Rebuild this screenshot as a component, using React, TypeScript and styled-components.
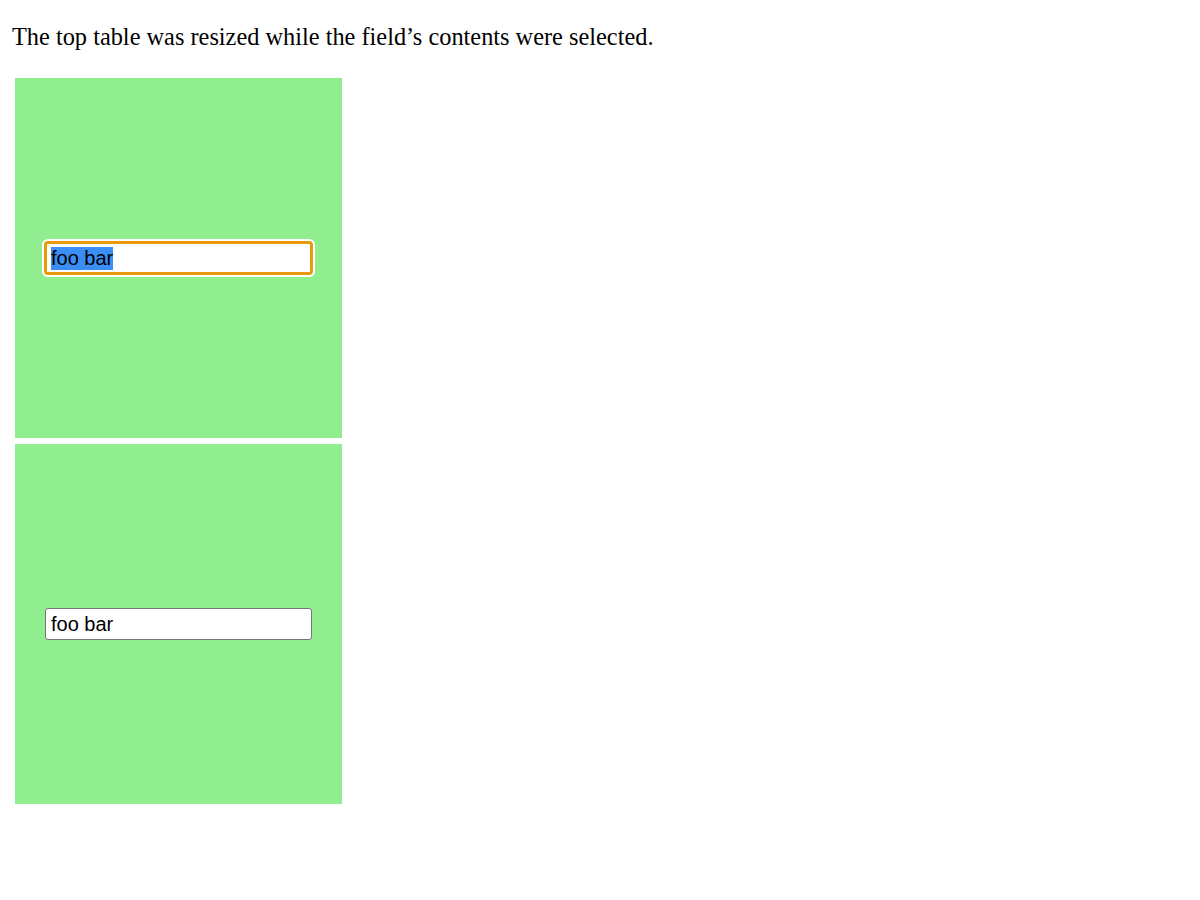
import React, { useEffect, useRef } from "react";
import styled, { createGlobalStyle } from "styled-components";

const Global = createGlobalStyle`
  html, body { margin: 0; padding: 0; background: #ffffff; }
  body { font-family: "Liberation Serif", "Times New Roman", serif; color: #000; }
`;

const Page = styled.div`
  display: flex;
  flex-direction: column;
  align-items: flex-start;
  padding: 23px 0 0 12px;
`;

const Caption = styled.p`
  margin: 0;
  font-size: 24.35px;
  line-height: 28px;
`;

const Stack = styled.div`
  display: flex;
  flex-direction: column;
  gap: 6px;
  margin: 27px 0 0 3px;
`;

const Cell = styled.div`
  width: 327px;
  height: 360px;
  background: #90ee90;
  display: flex;
  align-items: center;
  justify-content: center;
`;

const Field = styled.input<{ $active?: boolean }>`
  box-sizing: border-box;
  width: 267px;
  height: 32px;
  margin: 0;
  padding: 0 5px;
  font-family: "Liberation Sans", Arial, sans-serif;
  font-size: 20px;
  color: #000;
  background: #fff;
  border: 1px solid ${(p) => (p.$active ? "#e89a0c" : "#767676")};
  border-radius: 3px;
  outline: ${(p) => (p.$active ? "3px solid #e89a0c" : "none")};
  outline-offset: -2px;
  box-shadow: ${(p) => (p.$active ? "0 0 0 3px #ffffff" : "none")};

  &::selection {
    background: #3a8ef6;
    color: #000;
  }
`;

export default function App() {
  const ref = useRef<HTMLInputElement>(null);
  useEffect(() => {
    const el = ref.current;
    if (el) {
      el.focus();
      el.select();
    }
  }, []);
  return (
    <>
      <Global />
      <Page>
        <Caption>The top table was resized while the field’s contents were selected.</Caption>
        <Stack>
          <Cell>
            <Field ref={ref} $active defaultValue="foo bar" />
          </Cell>
          <Cell>
            <Field defaultValue="foo bar" />
          </Cell>
        </Stack>
      </Page>
    </>
  );
}
